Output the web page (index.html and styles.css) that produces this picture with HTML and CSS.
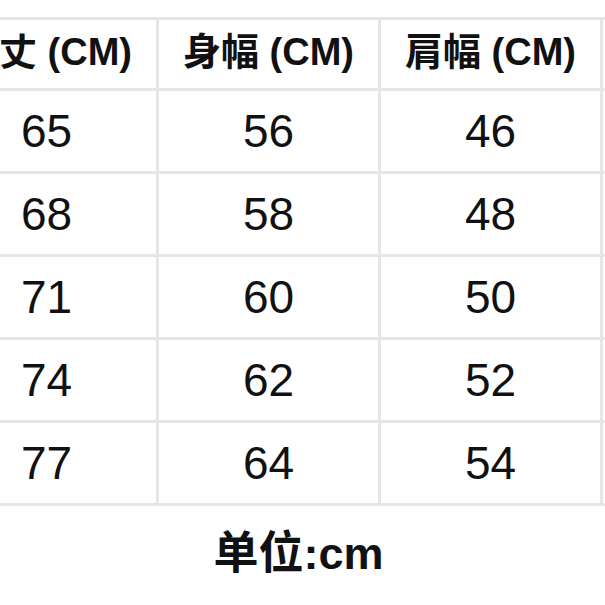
FILE: index.html
```html
<!DOCTYPE html>
<html lang="ja">
<head>
<meta charset="utf-8">
<link rel="stylesheet" href="styles.css">
</head>
<body>
<div class="page">
  <div class="grid">
    <div class="cell head">着丈 (CM)</div>
    <div class="cell head">身幅 (CM)</div>
    <div class="cell head">肩幅 (CM)</div>
    <div class="cell head"></div>

    <div class="cell">65</div><div class="cell">56</div><div class="cell">46</div><div class="cell"></div>
    <div class="cell">68</div><div class="cell">58</div><div class="cell">48</div><div class="cell"></div>
    <div class="cell">71</div><div class="cell">60</div><div class="cell">50</div><div class="cell"></div>
    <div class="cell">74</div><div class="cell">62</div><div class="cell">52</div><div class="cell"></div>
    <div class="cell">77</div><div class="cell">64</div><div class="cell">54</div><div class="cell"></div>
  </div>
  <div class="unit" lang="zh-CN">单位:cm</div>
</div>
</body>
</html>
```

FILE: styles.css
```css
html, body {
  margin: 0;
  padding: 0;
  background: #ffffff;
}

.page {
  width: 605px;
  height: 605px;
  overflow: hidden;
  padding-top: 17px;
  box-sizing: border-box;
  font-family: "Liberation Sans", "Noto Sans CJK JP", sans-serif;
  color: #111111;
}

.grid {
  display: grid;
  grid-template-columns: repeat(4, 219px);
  grid-template-rows: 68px repeat(5, 80px);
  gap: 3px;
  padding: 3px;
  background: #e6e6e6;
  width: max-content;
  margin-left: -66px;
}

.cell {
  background: #ffffff;
  display: flex;
  align-items: center;
  justify-content: center;
  font-size: 46px;
  font-weight: 400;
  line-height: 1;
  white-space: nowrap;
}

.cell.head {
  font-size: 38px;
  font-weight: 700;
  padding-bottom: 4px;
  box-sizing: border-box;
}

.unit {
  margin-top: 25px;
  padding-right: 8px;
  text-align: center;
  font-family: "Liberation Sans", "Noto Sans CJK SC", sans-serif;
  font-size: 45px;
  font-weight: 700;
  line-height: 1;
}
```
